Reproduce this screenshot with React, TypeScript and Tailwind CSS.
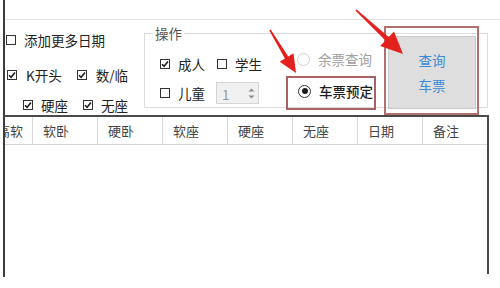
const font = { fontFamily: '"Noto Sans CJK SC", "Noto Sans", sans-serif' };

function Check({ label, checked = true, gap = "ml-[8px]" }: { label: string; checked?: boolean; gap?: string }) {
  return (
    <div className="flex h-4 items-center">
      <span className="flex h-[10px] w-[10px] items-center justify-center border border-[#333] bg-white">
        {checked && (
          <svg width="8" height="8" viewBox="0 0 8 8">
            <path d="M1 4.2 L3.1 6.3 L7 1.5" stroke="#1e1e1e" strokeWidth="1.6" fill="none" />
          </svg>
        )}
      </span>
      <span className={gap}>{label}</span>
    </div>
  );
}

function Radio({ label, on = false, disabled = false }: { label: string; on?: boolean; disabled?: boolean }) {
  return (
    <div className="flex h-4 items-center">
      <span
        className={
          disabled
            ? "flex h-[13px] w-[13px] items-center justify-center rounded-full border border-[#d0d0d0] bg-white"
            : "flex h-[13px] w-[13px] items-center justify-center rounded-full border border-[#333] bg-white"
        }
      >
        {on && <span className="h-[6px] w-[6px] rounded-full bg-[#1e1e1e]" />}
      </span>
      <span className={disabled ? "ml-[8px] text-[#a0a0a0]" : "ml-[8px] font-medium text-[#1e1e1e]"}>{label}</span>
    </div>
  );
}

const columns = ["软卧", "硬卧", "软座", "硬座", "无座", "日期", "备注"];

export default function App() {
  return (
    <div className="relative h-[288px] w-[500px] overflow-hidden bg-white text-[13.5px] leading-4 text-[#222]" style={font}>
      <div className="ml-[3px] flex h-[277px] flex-col border-l-2 border-[#3c3c3c]">
        <div className="h-[20px] shrink-0 border-b border-[#e4e4e4]" />

        <div className="flex h-[95px] shrink-0">
          {/* left options */}
          <div className="flex w-[139px] flex-col pt-[12px]">
            <div className="pl-[1px]">
              <Check label="添加更多日期" checked={false} />
            </div>
            <div className="mt-[19px] flex gap-[15px] pl-[2px]">
              <Check label="K开头" gap="ml-[9px]" />
              <Check label="数/临" gap="ml-[9px]" />
            </div>
            <div className="mt-[14px] flex gap-[15px] pl-[18px]">
              <Check label="硬座" />
              <Check label="无座" />
            </div>
          </div>

          {/* 操作 group */}
          <div className="relative mt-[13px] flex h-[75px] w-[344px] border border-[#dcdcdc]">
            <span className="absolute left-[8px] top-[-9px] bg-white px-[2px] text-[#555]">操作</span>
            <div className="flex w-[141px] flex-col pl-[15px] pt-[22px]">
              <div className="flex gap-[12px]">
                <Check label="成人" />
                <Check label="学生" checked={false} />
              </div>
              <div className="mt-[10px] flex items-center gap-[11px]">
                <Check label="儿童" checked={false} />
                <div className="flex h-[22px] w-[43px] border border-[#d4d4d4] bg-[#f0f0f0]">
                  <span className="flex-1 pl-[5px] pt-[3px] text-[#999]">1</span>
                  <div className="flex w-[13px] flex-col items-center justify-center gap-[3px]">
                    <svg width="7" height="4" viewBox="0 0 7 4">
                      <path d="M0.5 3.5 L3.5 0.5 L6.5 3.5" fill="#8a8a8a" />
                    </svg>
                    <svg width="7" height="4" viewBox="0 0 7 4">
                      <path d="M0.5 0.5 L3.5 3.5 L6.5 0.5" fill="#8a8a8a" />
                    </svg>
                  </div>
                </div>
              </div>
            </div>
            <div className="flex w-[102px] flex-col pl-[11px] pt-[17px]">
              <Radio label="余票查询" disabled />
              <div className="mt-[16px] pl-[1px]">
                <Radio label="车票预定" on />
              </div>
            </div>
            <button className="mt-[2px] flex h-[73px] w-[88px] flex-col items-center justify-center border border-[#c9c9c9] bg-[#dedede] leading-[25px] text-[#3a8ad4]">
              <span>查询</span>
              <span>车票</span>
            </button>
          </div>
        </div>

        {/* table */}
        <div className="flex h-[159px] w-[484px] flex-col border-r-2 border-t-2 border-[#4a4a4a]">
          <div className="flex h-[28px] border-b border-[#d6d6d6] text-[13px] text-[#444]">
            <div className="w-[27px] overflow-hidden whitespace-nowrap pt-[6px]">
              <span className="-ml-[8px]">高软</span>
            </div>
            {columns.map((c) => (
              <div key={c} className="w-[65px] border-l border-[#dadada] pl-[10px] pt-[6px]">
                {c}
              </div>
            ))}
          </div>
          <div className="flex-1 bg-white" />
        </div>
      </div>

      {/* annotations */}
      <div className="absolute left-[286px] top-[76px] h-[34px] w-[90px] border-2 border-[#a86262]" />
      <div className="absolute left-[384px] top-[26px] h-[89px] w-[95px] border-2 border-[#b07070]" />
      <svg className="pointer-events-none absolute left-0 top-0" width="500" height="288" viewBox="0 0 500 288">
        <polygon
          points="269.3,30.4 284.9,58.5 279.7,61.7 296,73 293.5,53.3 288.3,56.5 270.7,29.6"
          fill="#e3211d"
        />
        <polygon
          points="355.4,10.6 385.4,40.6 380.2,46 403,54 394,31.6 388.8,37 356.6,9.4"
          fill="#e3211d"
        />
      </svg>
    </div>
  );
}
